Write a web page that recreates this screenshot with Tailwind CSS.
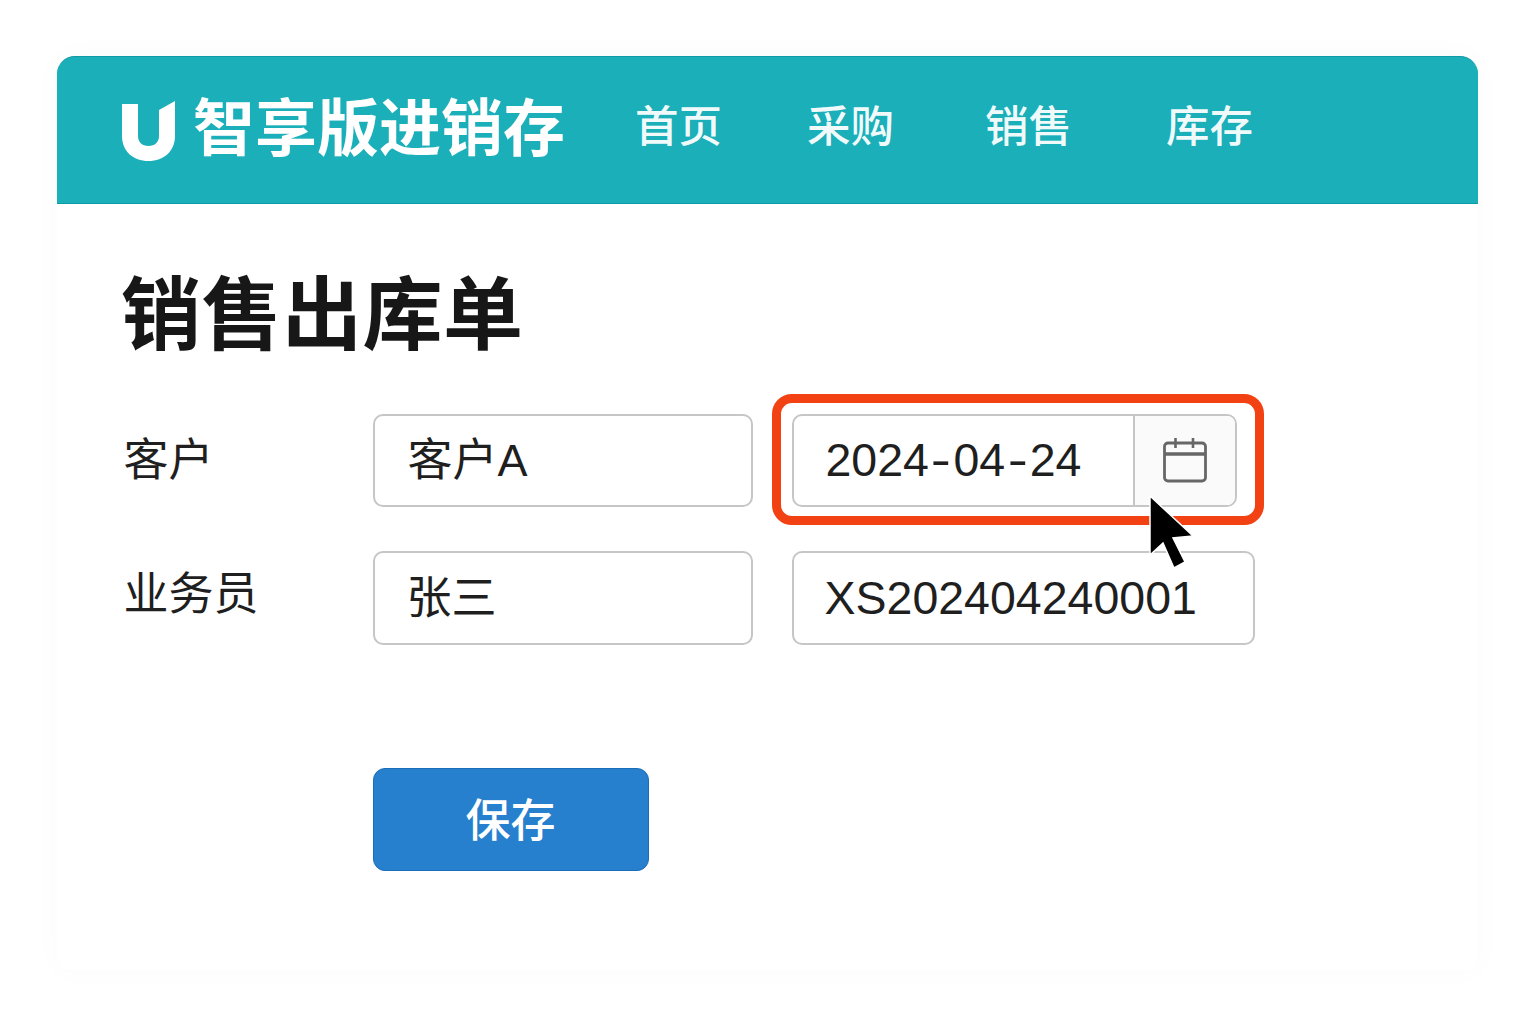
<!DOCTYPE html>
<html lang="zh">
<head>
<meta charset="utf-8">
<script src="https://cdn.jsdelivr.net/npm/@tailwindcss/browser@4"></script>
<title>销售出库单</title>
</head>
<body class="bg-white">
<div class="w-[1536px] h-[1024px] pt-[56px] pl-[57px] bg-white font-['Liberation_Sans','Noto_Sans_CJK_SC',sans-serif] overflow-hidden">
  <div class="w-[1421px] h-[914px] rounded-t-[18px] rounded-b-[14px] bg-white shadow-[0_0_32px_rgba(0,0,0,0.025)]">
    <header class="h-[148px] bg-[#1bafb9] rounded-t-[18px] border-t border-b border-[#0f9aa6] flex items-center pl-[65px]">
      <svg class="w-[53px] h-[60px] mr-[18px] mt-[1px]" viewBox="0 0 53 60" fill="none"><path d="M0 3H16V35C16 41 20 45 26.5 45C33 45 37 41 37 35V9L53 0V35C53 50 42 60 26.5 60C11 60 0 50 0 35Z" fill="#fff"/></svg>
      <div class="text-[62px] leading-none font-bold text-white w-[372px] whitespace-nowrap">智享版进销存</div>
      <nav class="flex text-[43.5px] leading-none font-medium text-white/95 ml-[70px] mb-[4px]">
        <a class="w-[172px]">首页</a>
        <a class="w-[178px]">采购</a>
        <a class="w-[181px]">销售</a>
        <a>库存</a>
      </nav>
    </header>
    <main class="pl-[66.5px] pt-[72px]">
      <h1 class="text-[80px] leading-[80px] font-bold text-[#171717] tracking-[0.5px] -ml-[2.5px]">销售出库单</h1>
      <div class="relative mt-[58px] grid grid-cols-[210px_380px_auto] gap-x-[39px] gap-y-[44px] items-start text-[#1f1f1f]">
        <label class="text-[45px] leading-[94px] h-[93px]">客户</label>
        <div class="h-[93px] w-[380px] border-2 border-[#c6c6c6] rounded-[10px] flex items-center pl-[33px] pt-[1px] text-[45px]">客户A</div>
        <div class="relative w-[445px] h-[93px]">
          <div class="absolute -left-[20px] -top-[20px] w-[492px] h-[131px] border-[9px] border-[#f24214] rounded-[20px]"></div>
          <div class="h-[93px] w-[445px] border-2 border-[#c6c6c6] rounded-[10px] flex overflow-hidden">
            <div class="w-[339px] flex items-center pl-[32px] text-[46.5px]">2024<span class="inline-block scale-x-[1.3] mx-[4.5px]">-</span>04<span class="inline-block scale-x-[1.3] mx-[4.5px]">-</span>24</div>
            <div class="flex-1 border-l-2 border-[#c6c6c6] bg-[#fafafa] flex items-center justify-center">
              <svg class="w-[44px] h-[45px]" viewBox="0 0 44 45" fill="none" stroke="#666" stroke-linejoin="round"><rect x="1.5" y="5" width="41" height="38" rx="3.5" stroke-width="2.8"/><path d="M1.5 16H42.5" stroke-width="3.5"/><path d="M12.5 0V10M30 0V10" stroke-width="2.6"/></svg>
            </div>
          </div>
          <svg class="absolute left-[356px] top-[80px] w-[48px] h-[76px] z-10" viewBox="0 0 48 76" fill="none"><path d="M2 2V61L15 49L26 74L37 68L25 44L45 42Z" fill="#000" stroke="#fff" stroke-width="1.5"/></svg>
        </div>
        <label class="text-[45px] leading-[88px] h-[94px]">业务员</label>
        <div class="h-[94px] w-[380px] border-2 border-[#c6c6c6] rounded-[10px] flex items-center pl-[32px] pt-[1px] text-[45px]">张三</div>
        <div class="h-[94px] w-[463px] border-2 border-[#c6c6c6] rounded-[10px] flex items-center pl-[31px] pt-[1px] text-[46.5px]">XS202404240001</div>
      </div>
      <button class="block mt-[123px] ml-[249px] w-[276px] h-[103px] pt-[3px] rounded-[12px] bg-[#2680cd] border border-[#1a6db8] text-white text-[45px] font-medium leading-none">保存</button>
    </main>
  </div>
</div>
</body>
</html>
